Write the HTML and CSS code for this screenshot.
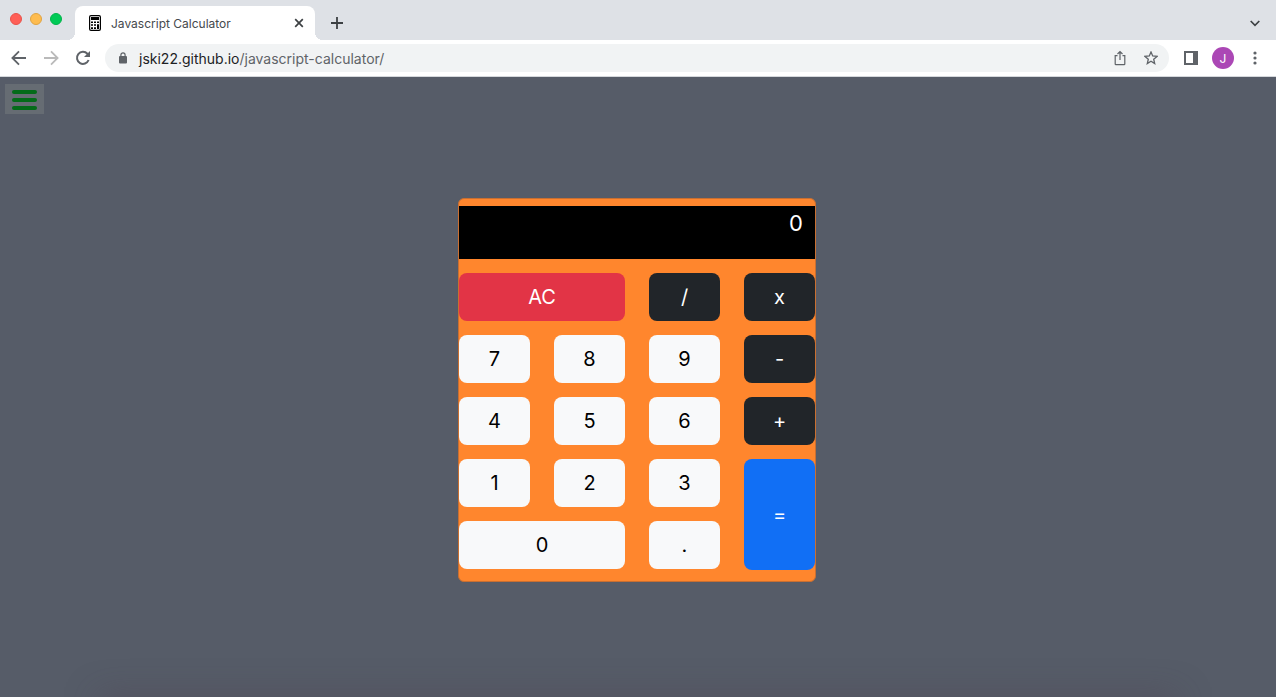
FILE: index.html
```html
<!DOCTYPE html>
<html lang="en">
<head>
<meta charset="utf-8">
<title>Javascript Calculator</title>
<link rel="stylesheet" href="styles.css">
</head>
<body>
<header class="browser">
  <div class="tab-strip">
    <div class="lights"><span class="light red"></span><span class="light amber"></span><span class="light green"></span></div>
    <div class="tab">
      <svg class="favicon" width="12" height="16" viewBox="0 0 12 16"><rect x=".6" y=".6" width="10.8" height="14.8" rx="1.4" fill="#fff" stroke="#000" stroke-width="1.2"/><path d="M2 2h8v3H2zM2 6.500h2v1.500H2zM5 6.500h2v1.500H5zM8 6.500h2v1.500H8zM2 9.200h2v1.600H2zM5 9.200h2v1.600H5zM8 9.200h2v4.800H8zM2 12.200h2v1.800H2zM5 12.200h2v1.800H5z" fill="#000"/></svg>
      <span class="tab-title">Javascript Calculator</span>
      <button class="icon-button" aria-label="Close tab"><svg width="10" height="10" viewBox="0 0 10 10"><path d="M1.200 1.200l7.600 7.600M8.800 1.200L1.200 8.800" stroke="#3c4043" stroke-width="1.700"/></svg></button>
    </div>
    <button class="icon-button new-tab" aria-label="New tab"><svg width="12" height="12" viewBox="0 0 12 12"><path d="M6 0v12M0 6h12" stroke="#3c4043" stroke-width="1.800"/></svg></button>
    <button class="icon-button tab-search" aria-label="Search tabs"><svg width="10" height="7" viewBox="0 0 10 7"><path d="M.7 1L5 5.300 9.300 1" fill="none" stroke="#3c4043" stroke-width="1.700"/></svg></button>
  </div>
  <div class="toolbar">
    <nav class="history">
      <button class="icon-button" aria-label="Back"><svg width="16" height="16" viewBox="0 0 16 16"><path d="M15 8H2M8 1.400L1.400 8 8 14.600" fill="none" stroke="#5f6368" stroke-width="1.800"/></svg></button>
      <button class="icon-button" aria-label="Forward"><svg width="16" height="16" viewBox="0 0 16 16"><path d="M1 8h13M8 1.400L14.600 8 8 14.600" fill="none" stroke="#bababa" stroke-width="1.800"/></svg></button>
      <button class="icon-button" aria-label="Reload"><svg width="16" height="16" viewBox="0 0 16 16"><path d="M13.600 10A6 6 0 1 1 12.400 3.800L14 5.500" fill="none" stroke="#5f6368" stroke-width="2"/><path d="M15 1v6H9z" fill="#5f6368"/></svg></button>
    </nav>
    <div class="address">
      <svg width="8" height="12" viewBox="0 0 8 12"><rect y="4" width="8" height="7.500" rx="1" fill="#5f6368"/><path d="M1.900 5V3a2.100 2.100 0 0 1 4.200 0v2" fill="none" stroke="#5f6368" stroke-width="1.200"/></svg>
      <a class="url" href="#"><span class="host">jski22.github.io</span>/javascript-calculator/</a>
      <button class="icon-button" aria-label="Share"><svg width="12" height="16" viewBox="0 0 12 16"><path d="M3.500 5.600H1.200V14a.7.700 0 0 0 .7.700h8.200a.7.700 0 0 0 .7-.7V5.600H8.500M6 10V2M3.500 4L6 1.500 8.500 4" fill="none" stroke="#5f6368" stroke-width="1.200"/></svg></button>
      <button class="icon-button" aria-label="Bookmark"><svg width="14" height="14" viewBox="0 0 14 14"><path d="M7 1l1.700 4 4.300.4-3.300 2.800 1 4.300L7 10.200l-3.700 2.300 1-4.300L1 5.400 5.300 5z" fill="none" stroke="#5f6368" stroke-width="1.300"/></svg></button>
    </div>
    <div class="actions">
      <button class="icon-button" aria-label="Side panel"><svg width="14" height="14" viewBox="0 0 14 14"><path fill="#5f6368" fill-rule="evenodd" d="M0 0h14v14H0zM2 2v10h7V2z"/></svg></button>
      <button class="avatar" aria-label="Profile J">J</button>
      <button class="icon-button" aria-label="Menu"><svg width="4" height="14" viewBox="0 0 4 14"><g fill="#5f6368"><circle cx="2" cy="2" r="1.600"/><circle cx="2" cy="7" r="1.600"/><circle cx="2" cy="12" r="1.600"/></g></svg></button>
    </div>
  </div>
</header>
<main class="page">
  <button class="menu" aria-label="Open menu"><span class="bar"></span><span class="bar"></span><span class="bar"></span></button>
  <section class="calculator" aria-label="Calculator">
    <output class="display">0</output>
    <div class="keys">
      <button class="key clear wide">AC</button>
      <button class="key operator">/</button>
      <button class="key operator">x</button>
      <button class="key">7</button>
      <button class="key">8</button>
      <button class="key">9</button>
      <button class="key operator">-</button>
      <button class="key">4</button>
      <button class="key">5</button>
      <button class="key">6</button>
      <button class="key operator">+</button>
      <button class="key">1</button>
      <button class="key">2</button>
      <button class="key">3</button>
      <button class="key equals">=</button>
      <button class="key wide">0</button>
      <button class="key">.</button>
    </div>
  </section>
</main>
</body>
</html>
```
FILE: styles.css
```css
* { box-sizing: border-box; }
body {
  margin: 0;
  min-height: 100vh;
  display: flex;
  flex-direction: column;
  font-family: Inter, "Liberation Sans", sans-serif;
}
button { font: inherit; border: 0; cursor: pointer; }
svg { display: block; flex: none; }
.icon-button { padding: 0; background: none; }

.tab-strip {
  display: flex;
  align-items: center;
  height: 40px;
  background: #dee1e6;
}
.lights {
  display: flex;
  gap: 8px;
  padding: 0 13px 2px 10px;
}
.light {
  width: 12px;
  height: 12px;
  border-radius: 50%;
  border: 1px solid;
}
.red { background: #ff5f57; border-color: #e9524a; }
.amber { background: #febc4f; border-color: #e0a442; }
.green { background: #00ca56; border-color: #00b44a; }
.tab {
  display: flex;
  align-items: center;
  align-self: flex-end;
  width: 240px;
  height: 34px;
  padding: 0 11px 0 14px;
  gap: 10px;
  background: #fff;
  border-radius: 8px 8px 0 0;
  position: relative;
}
.tab::before,
.tab::after {
  content: "";
  position: absolute;
  bottom: 0;
  width: 8px;
  height: 8px;
}
.tab::before {
  left: -8px;
  background: radial-gradient(circle at 0 0, transparent 8px, #fff 8px);
}
.tab::after {
  right: -8px;
  background: radial-gradient(circle at 100% 0, transparent 8px, #fff 8px);
}
.tab-title {
  flex: 1;
  font-size: 12px;
  color: #45494d;
  white-space: nowrap;
}
.new-tab { margin: 6px 0 0 16px; }
.tab-search { margin: 6px 16px 0 auto; }

.toolbar {
  display: flex;
  align-items: center;
  height: 37px;
  background: #fff;
  border-bottom: 1px solid #d5d8dc;
}
.history {
  display: flex;
  gap: 16px;
  padding: 0 14px 0 11px;
}
.address {
  flex: 1;
  display: flex;
  align-items: center;
  gap: 18px;
  height: 28px;
  padding: 0 11px 0 14px;
  background: #f1f3f4;
  border-radius: 14px;
}
.url {
  flex: 1;
  margin-left: -6px;
  font-size: 14px;
  color: #5f6368;
  text-decoration: none;
}
.host { color: #202124; }
.actions {
  display: flex;
  align-items: center;
  gap: 14px;
  padding: 0 19px 0 15px;
}
.actions .icon-button:last-child { margin-left: 5px; }
.avatar {
  width: 22px;
  height: 22px;
  padding: 0;
  border-radius: 50%;
  background: #ab47b5;
  color: #fff;
  font-size: 12px;
}

.page {
  flex: 1;
  display: flex;
  align-items: center;
  justify-content: center;
  padding: 6px 2px 0 0;
  position: relative;
  overflow: hidden;
  background: #565c68;
}
.page::after {
  content: "";
  position: absolute;
  top: 100%;
  left: 100px;
  right: 100px;
  height: 20px;
  box-shadow: 0 0 32px rgba(80, 66, 80, .5);
}
.menu {
  position: absolute;
  top: 7px;
  left: 5px;
  display: flex;
  flex-direction: column;
  gap: 4px;
  width: 39px;
  padding: 6px 7px 4px;
  background: #666c73;
}
.bar {
  height: 4px;
  border-radius: 2px;
  background: #046b19;
}

.calculator {
  width: 358px;
  padding: 7px 0 12px;
  background: #ff862d;
  border: 1px solid #c96f31;
  border-radius: 6px;
}
.display {
  display: block;
  height: 53px;
  padding: 2px 12px;
  background: #000;
  color: #fff;
  font-size: 22px;
  line-height: 30px;
  text-align: right;
}
.keys {
  display: grid;
  grid-template-columns: repeat(4, 1fr);
  grid-auto-rows: 48px;
  gap: 14px 24px;
  padding-top: 14px;
}
.key {
  padding: 0;
  border-radius: 8px;
  background: #f8f9fa;
  color: #000;
  font-size: 20px;
}
.wide { grid-column: span 2; }
.clear { background: #e23446; color: #fff; }
.operator { background: #212529; color: #fff; }
.equals {
  grid-column: 4;
  grid-row: 4 / span 2;
  margin-bottom: -1px;
  background: #116ff5;
  color: #fff;
}
```
